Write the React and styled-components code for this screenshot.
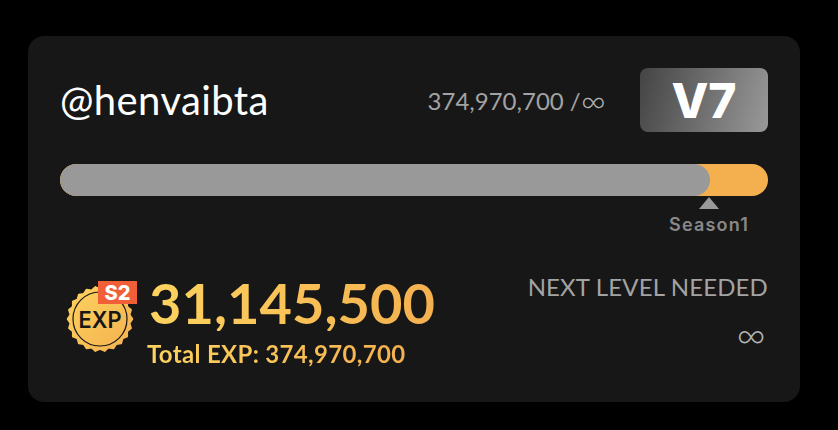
import styled, { createGlobalStyle } from "styled-components";

const GlobalStyle = createGlobalStyle`
  html, body {
    margin: 0;
    padding: 0;
    background: #000;
  }
`;

const Page = styled.div`
  width: 838px;
  height: 430px;
  padding: 36px 38px 28px 28px;
  box-sizing: border-box;
  overflow: hidden;
`;

const Card = styled.div`
  height: 366px;
  padding: 32px;
  box-sizing: border-box;
  background: #171717;
  border-radius: 16px;
  font-family: Lato, sans-serif;
`;

const TopRow = styled.div`
  display: flex;
  align-items: center;
  height: 64px;
`;

const Handle = styled.div`
  flex: 1;
  font-size: 40px;
  letter-spacing: 0.4px;
  color: #fff;
`;

const Progress = styled.div`
  display: flex;
  align-items: center;
  font-size: 24px;
  color: #a3a3a3;
  margin-right: 34px;
`;

const Infinity = styled.span`
  font-size: ${(props) => props.size}px;
  font-weight: 300;
  line-height: 1;
  color: #b4b4b4;
  margin-left: ${(props) => props.gap}px;
`;

const Level = styled.div`
  width: 128px;
  height: 64px;
  display: flex;
  align-items: center;
  justify-content: center;
  border-radius: 8px;
  background: linear-gradient(105deg, #444 0%, #999 100%);
  color: #fff;
  font-family: Inter, sans-serif;
  font-size: 48px;
  font-weight: 800;
`;

const Bar = styled.div`
  height: 32px;
  margin-top: 32px;
  border-radius: 16px;
  background: #f4b04f;
  overflow: hidden;
`;

const BarFill = styled.div`
  height: 100%;
  border-radius: 16px;
  background: #999;
`;

const MarkerRow = styled.div`
  display: flex;
  justify-content: flex-end;
  padding-right: 18px;
  margin-top: 1px;
`;

const Marker = styled.div`
  display: flex;
  flex-direction: column;
  align-items: center;
  gap: 6px;
  width: 82px;
`;

const Arrow = styled.div`
  width: 0;
  height: 0;
  border-left: 10px solid transparent;
  border-right: 10px solid transparent;
  border-bottom: 12px solid #999;
`;

const MarkerLabel = styled.div`
  font-family: Inter, sans-serif;
  font-size: 18px;
  font-weight: 600;
  line-height: 20px;
  letter-spacing: 1.2px;
  color: #888;
  white-space: nowrap;
`;

const BottomRow = styled.div`
  display: flex;
  justify-content: space-between;
  margin-top: 40px;
`;

const ExpBlock = styled.div`
  display: flex;
  align-items: flex-start;
  padding-left: 6px;
`;

const Badge = styled.div`
  position: relative;
  width: 68px;
  height: 68px;
  margin-top: 10px;
  margin-right: 15px;

  svg {
    display: block;
  }
`;

const Season = styled.div`
  position: absolute;
  top: -4px;
  right: -3px;
  width: 39px;
  height: 23px;
  display: flex;
  align-items: center;
  justify-content: center;
  background: #f05f38;
  color: #fff;
  font-family: Inter, sans-serif;
  font-size: 20px;
  font-weight: 800;
`;

const ExpText = styled.div`
  display: flex;
  flex-direction: column;
`;

const gold = `
  background: linear-gradient(90deg, #fdd35f 0%, #f4b04f 100%);
  -webkit-background-clip: text;
  background-clip: text;
  color: transparent;
`;

const ExpValue = styled.div`
  ${gold}
  font-size: 56px;
  font-weight: 700;
  line-height: 56px;
`;

const ExpTotal = styled.div`
  ${gold}
  font-size: 24px;
  font-weight: 700;
  letter-spacing: 0.33px;
  line-height: 30px;
  margin-top: 8px;
  margin-left: -2px;
  width: max-content;
`;

const NextBlock = styled.div`
  display: flex;
  flex-direction: column;
  align-items: flex-end;
  margin-top: -3px;
`;

const NextLabel = styled.div`
  font-size: 24px;
  letter-spacing: 0.15px;
  line-height: 30px;
  color: #a3a3a3;
`;

const NextValue = styled.div`
  height: 36px;
  margin-top: 14px;
  padding-right: 2px;
  display: flex;
  align-items: center;
`;

// scalloped seal outline around (34,34)
const sealPath = () => {
  const points = [];
  const teeth = 22;
  for (let i = 0; i < teeth * 2; i++) {
    const r = i % 2 === 0 ? 32.5 : 30;
    const a = (Math.PI * i) / teeth;
    points.push(`${(34 + r * Math.cos(a)).toFixed(2)},${(34 + r * Math.sin(a)).toFixed(2)}`);
  }
  return `M${points.join("L")}Z`;
};

const ExpSeal = () => (
  <svg width="68" height="68" viewBox="0 0 68 68">
    <defs>
      <linearGradient id="seal" x1="0" y1="0" x2="1" y2="1">
        <stop offset="0" stopColor="#fdd35f" />
        <stop offset="1" stopColor="#f4b04f" />
      </linearGradient>
    </defs>
    <path d={sealPath()} fill="url(#seal)" stroke="url(#seal)" strokeWidth="1.5" strokeLinejoin="round" />
    <circle cx="34" cy="34" r="27" fill="none" stroke="#171717" strokeWidth="1.2" />
    <text
      x="34"
      y="43"
      textAnchor="middle"
      fontFamily="Inter, sans-serif"
      fontSize="23"
      fontWeight="600"
      fill="#171717"
      textLength="43"
      lengthAdjust="spacingAndGlyphs"
    >
      EXP
    </text>
  </svg>
);

export default function App() {
  return (
    <Page>
      <GlobalStyle />
      <Card>
        <TopRow>
          <Handle>@henvaibta</Handle>
          <Progress>
            374,970,700 /<Infinity size={34} gap={0}>∞</Infinity>
          </Progress>
          <Level>V7</Level>
        </TopRow>
        <Bar>
          <BarFill style={{ width: `${(650 / 708) * 100}%` }} />
        </Bar>
        <MarkerRow>
          <Marker>
            <Arrow />
            <MarkerLabel>Season1</MarkerLabel>
          </Marker>
        </MarkerRow>
        <BottomRow>
          <ExpBlock>
            <Badge>
              <ExpSeal />
              <Season>S2</Season>
            </Badge>
            <ExpText>
              <ExpValue>31,145,500</ExpValue>
              <ExpTotal>Total EXP: 374,970,700</ExpTotal>
            </ExpText>
          </ExpBlock>
          <NextBlock>
            <NextLabel>NEXT LEVEL NEEDED</NextLabel>
            <NextValue>
              <Infinity size={40} gap={0}>∞</Infinity>
            </NextValue>
          </NextBlock>
        </BottomRow>
      </Card>
    </Page>
  );
}
